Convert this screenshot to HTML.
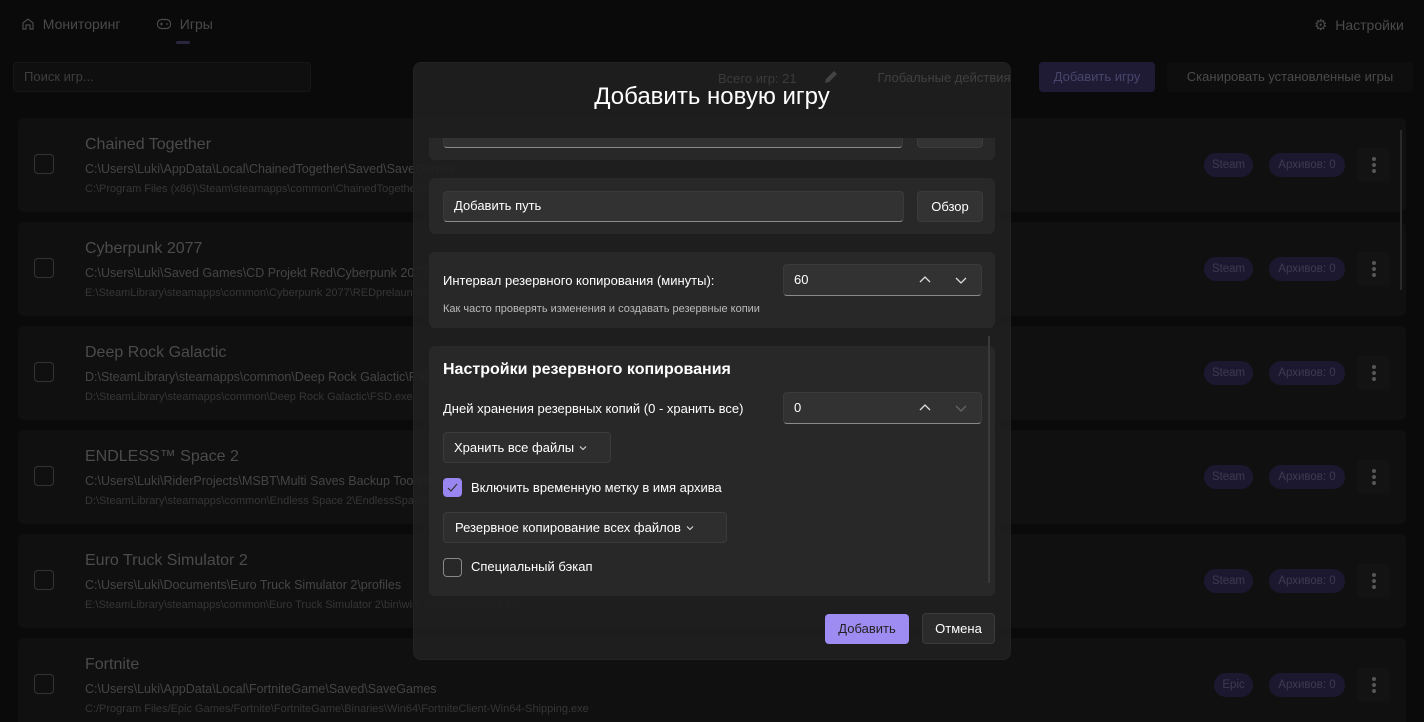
<!DOCTYPE html><html><head><meta charset="utf-8"><style>
*{box-sizing:border-box;margin:0;padding:0}
html,body{width:1424px;height:722px;overflow:hidden}
body{background:#0a0a0a;font-family:"Liberation Sans",sans-serif;color:#fff;position:relative}
.a{position:absolute}
.card{position:absolute;left:18px;width:1388px;height:94px;background:#101010;border-radius:6px}
.card .cb{position:absolute;left:16px;top:36px;width:20px;height:20px;border:1px solid #333;border-radius:4px}
.card .t{position:absolute;left:67px;top:18px;font-size:16px;color:#4b4b4b}
.card .p{position:absolute;left:67px;top:44px;font-size:12.5px;color:#454545;white-space:nowrap}
.card .e{position:absolute;left:67px;top:65px;font-size:11px;color:#363636;white-space:nowrap}
.badge{position:absolute;top:35px;height:24px;border-radius:12px;background:#1c1830;color:#3e3a55;font-size:11.5px;line-height:24px;text-align:center}
.dots{position:absolute;left:1339px;top:30px;width:33px;height:34px;border-radius:4px;background:#131313}
.dots i{position:absolute;left:15px;width:4px;height:4px;border-radius:2px;background:#555}
.sec{position:absolute;left:15px;width:566px;background:#282828;border-radius:6px}
.inp{position:absolute;background:#323232;border-radius:4px;border:1px solid #3a3a3a;border-bottom:1px solid #8a8a8a;font-size:13px;line-height:28px;padding-left:10px}
.btn{position:absolute;background:#333;border-radius:4px;font-size:13px;text-align:center;border:1px solid #3b3b3b}
.lbl{position:absolute;font-size:13px}
.ch{position:absolute}
</style></head><body>
<div class="a" style="left:21px;top:16px;font-size:14px;color:#4a4a4a"><svg width="14" height="14" viewBox="0 0 14 14" style="vertical-align:-2px"><path d="M2 6L7 2l5 4v6H9V8H5v4H2z" fill="none" stroke="#4a4a4a" stroke-width="1.2"/></svg> &nbsp;Мониторинг</div>
<div class="a" style="left:156px;top:16px;font-size:14px;color:#4a4a4a"><svg width="16" height="14" viewBox="0 0 16 14" style="vertical-align:-2px"><rect x="1.5" y="2.5" width="13" height="9" rx="4" fill="none" stroke="#4a4a4a" stroke-width="1.2"/><path d="M4 7h3M5.5 5.5v3" stroke="#4a4a4a" stroke-width="1.1"/><circle cx="11" cy="7" r=".9" fill="#4a4a4a"/></svg> &nbsp;Игры</div>
<div class="a" style="left:176px;top:41px;width:14px;height:3px;border-radius:2px;background:#2a2640"></div>
<div class="a" style="left:1314px;top:16px;font-size:14px;color:#4a4a4a"><span style="font-size:15px">⚙</span> &nbsp;Настройки</div>
<div class="a" style="left:13px;top:62px;width:298px;height:30px;background:#0f0f0f;border:1px solid #171717;border-radius:4px;font-size:13px;color:#3e3e3e;line-height:28px;padding-left:10px">Поиск игр...</div>
<div class="a" style="left:1039px;top:62px;width:116px;height:30px;background:#1f1b35;border-radius:4px;font-size:13px;color:#48456a;line-height:30px;text-align:center">Добавить игру</div>
<div class="a" style="left:1167px;top:62px;width:246px;height:30px;background:#0e0e0e;border-radius:4px;font-size:13px;color:#4a4a4a;line-height:30px;text-align:center">Сканировать установленные игры</div>

<div class="card" style="top:118px"><div class="cb"></div><div class="t">Chained Together</div><div class="p">C:\Users\Luki\AppData\Local\ChainedTogether\Saved\SaveGames</div><div class="e">C:\Program Files (x86)\Steam\steamapps\common\ChainedTogether\ChainedTogether.exe</div><div class="badge" style="left:1186px;width:49px">Steam</div><div class="badge" style="left:1251px;width:76px">Архивов: 0</div><div class="dots"><i style="top:9px"></i><i style="top:15px"></i><i style="top:21px"></i></div></div>
<div class="card" style="top:222px"><div class="cb"></div><div class="t">Cyberpunk 2077</div><div class="p">C:\Users\Luki\Saved Games\CD Projekt Red\Cyberpunk 2077</div><div class="e">E:\SteamLibrary\steamapps\common\Cyberpunk 2077\REDprelauncher.exe</div><div class="badge" style="left:1186px;width:49px">Steam</div><div class="badge" style="left:1251px;width:76px">Архивов: 0</div><div class="dots"><i style="top:9px"></i><i style="top:15px"></i><i style="top:21px"></i></div></div>
<div class="card" style="top:326px"><div class="cb"></div><div class="t">Deep Rock Galactic</div><div class="p">D:\SteamLibrary\steamapps\common\Deep Rock Galactic\FSD\Saved\SaveGames</div><div class="e">D:\SteamLibrary\steamapps\common\Deep Rock Galactic\FSD.exe</div><div class="badge" style="left:1186px;width:49px">Steam</div><div class="badge" style="left:1251px;width:76px">Архивов: 0</div><div class="dots"><i style="top:9px"></i><i style="top:15px"></i><i style="top:21px"></i></div></div>
<div class="card" style="top:430px"><div class="cb"></div><div class="t">ENDLESS™ Space 2</div><div class="p">C:\Users\Luki\RiderProjects\MSBT\Multi Saves Backup Tool\bin\Debug\net9.0\win-x64\%userprofile%\Documents\Endless Space 2\Save Files</div><div class="e">D:\SteamLibrary\steamapps\common\Endless Space 2\EndlessSpace2.exe</div><div class="badge" style="left:1186px;width:49px">Steam</div><div class="badge" style="left:1251px;width:76px">Архивов: 0</div><div class="dots"><i style="top:9px"></i><i style="top:15px"></i><i style="top:21px"></i></div></div>
<div class="card" style="top:534px"><div class="cb"></div><div class="t">Euro Truck Simulator 2</div><div class="p">C:\Users\Luki\Documents\Euro Truck Simulator 2\profiles</div><div class="e">E:\SteamLibrary\steamapps\common\Euro Truck Simulator 2\bin\win_x64\eurotrucks2.exe</div><div class="badge" style="left:1186px;width:49px">Steam</div><div class="badge" style="left:1251px;width:76px">Архивов: 0</div><div class="dots"><i style="top:9px"></i><i style="top:15px"></i><i style="top:21px"></i></div></div>
<div class="card" style="top:638px"><div class="cb"></div><div class="t">Fortnite</div><div class="p">C:\Users\Luki\AppData\Local\FortniteGame\Saved\SaveGames</div><div class="e">C:/Program Files/Epic Games/Fortnite\FortniteGame\Binaries\Win64\FortniteClient-Win64-Shipping.exe</div><div class="badge" style="left:1196px;width:39px">Epic</div><div class="badge" style="left:1251px;width:76px">Архивов: 0</div><div class="dots"><i style="top:9px"></i><i style="top:15px"></i><i style="top:21px"></i></div></div>
<div class="a" style="left:1400px;top:130px;width:2px;height:160px;background:#2a2a2a"></div>

<div class="a" style="left:413px;top:62px;width:598px;height:598px;background:rgba(31,31,31,0.93);border-radius:8px;border:1px solid #222">
 <div class="a" style="left:304px;top:8px;font-size:13px;color:#3b3b3b">Всего игр: 21</div>
 <div class="a" style="left:448px;top:0px;width:164px;height:30px;font-size:13px;color:#404040;line-height:30px;text-align:center">Глобальные действия</div>
 <div class="a" style="left:0;top:20px;width:596px;text-align:center;font-size:24px;color:#fff">Добавить новую игру</div>
 <div class="a" style="left:0;top:75px;width:596px;height:522px;overflow:hidden">
  <div class="sec" style="top:-30px;height:52px"><div class="inp" style="left:14px;top:10px;width:460px;height:30px"></div><div class="btn" style="left:488px;top:10px;width:66px;height:30px"></div></div>
  <div class="sec" style="top:40px;height:56px"><div class="inp" style="left:14px;top:13px;width:461px;height:31px">Добавить путь</div><div class="btn" style="left:488px;top:13px;width:66px;height:31px;line-height:29px">Обзор</div></div>
  <div class="sec" style="top:114px;height:76px"><div class="lbl" style="left:14px;top:21px">Интервал резервного копирования (минуты):</div><div class="inp" style="left:354px;top:12px;width:199px;height:32px;line-height:30px">60
   <svg class="ch" style="left:134px;top:10px" width="14" height="10" viewBox="0 0 14 10"><path d="M2 7l5-5 5 5" fill="none" stroke="#ddd" stroke-width="1.3"/></svg>
   <svg class="ch" style="left:170px;top:10px" width="14" height="10" viewBox="0 0 14 10"><path d="M2 3l5 5 5-5" fill="none" stroke="#ddd" stroke-width="1.3"/></svg></div>
   <div class="lbl" style="left:14px;top:51px;font-size:11px;color:#bbb">Как часто проверять изменения и создавать резервные копии</div></div>
  <div class="sec" style="top:208px;height:250px">
   <div class="lbl" style="left:14px;top:15px;font-size:16px;font-weight:bold">Настройки резервного копирования</div>
   <div class="lbl" style="left:14px;top:55px">Дней хранения резервных копий (0 - хранить все)</div>
   <div class="inp" style="left:354px;top:46px;width:199px;height:32px;line-height:30px">0
   <svg class="ch" style="left:134px;top:10px" width="14" height="10" viewBox="0 0 14 10"><path d="M2 7l5-5 5 5" fill="none" stroke="#ddd" stroke-width="1.3"/></svg>
   <svg class="ch" style="left:170px;top:10px" width="14" height="10" viewBox="0 0 14 10"><path d="M2 3l5 5 5-5" fill="none" stroke="#666" stroke-width="1.3"/></svg></div>
   <div class="btn" style="left:14px;top:86px;width:168px;height:31px;line-height:29px;text-align:left;padding-left:10px;background:#2e2e2e">Хранить все файлы <svg width="10" height="8" viewBox="0 0 10 8"><path d="M2 2.5l3 3 3-3" fill="none" stroke="#ddd" stroke-width="1.1"/></svg></div>
   <div class="a" style="left:14px;top:132px;width:19px;height:19px;border-radius:4px;background:#9a86f0"><svg width="19" height="19" viewBox="0 0 19 19"><path d="M5 10l3 3 6-7" fill="none" stroke="#333" stroke-width="1.2"/></svg></div>
   <div class="lbl" style="left:42px;top:134px">Включить временную метку в имя архива</div>
   <div class="btn" style="left:14px;top:166px;width:284px;height:31px;line-height:29px;text-align:left;padding-left:11px;background:#2e2e2e">Резервное копирование всех файлов <svg width="10" height="8" viewBox="0 0 10 8"><path d="M2 2.5l3 3 3-3" fill="none" stroke="#ddd" stroke-width="1.1"/></svg></div>
   <div class="a" style="left:14px;top:212px;width:19px;height:19px;border-radius:4px;border:1px solid #888"></div>
   <div class="lbl" style="left:42px;top:213px">Специальный бэкап</div>
  </div>
  <div class="a" style="left:574px;top:198px;width:2px;height:247px;background:#3a3a3a"></div>
  <div class="a" style="left:411px;top:476px;width:84px;height:30px;background:#9f8cf2;border-radius:4px;color:#222;font-size:13px;line-height:30px;text-align:center">Добавить</div>
  <div class="btn" style="left:508px;top:475px;width:73px;height:31px;line-height:30px;background:#2b2b2b">Отмена</div>
 </div>
</div>
<svg class="a" style="left:822px;top:68px" width="18" height="18" viewBox="0 0 18 18"><path d="M3 15l1-4 8-8 3 3-8 8z" fill="#444"/></svg>
</body></html>
